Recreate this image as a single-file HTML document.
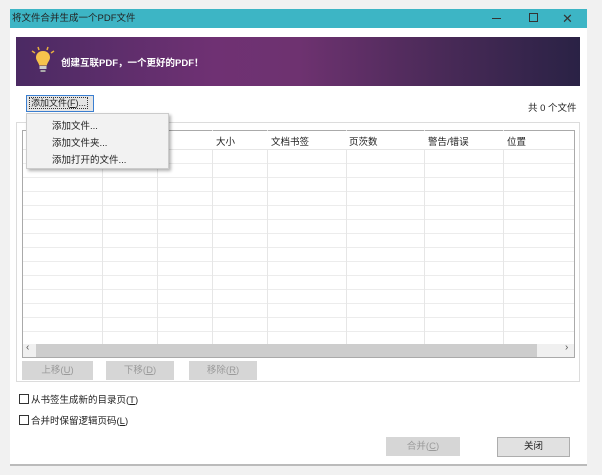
<!DOCTYPE html>
<html><head><meta charset="utf-8"><style>
*{margin:0;padding:0;box-sizing:border-box}
body{width:602px;height:475px;background:#f1f1f1;position:relative;overflow:hidden;font-family:"Liberation Sans","Noto Sans CJK SC",sans-serif;font-size:9.5px;color:#222}
.a{position:absolute;white-space:nowrap}
.win{left:10px;top:9px;width:577px;height:456px;background:#fff}
.title{left:10px;top:9px;width:577px;height:19px;background:#3db5c5;color:#222;font-size:9.5px;line-height:19px;padding-left:2px}
.banner{left:16px;top:37px;width:564px;height:49px;background:linear-gradient(90deg,#4b2a63 0%,#6f3173 35%,#6e3270 50%,#4a2a58 75%,#2a2245 100%)}
.btn{background:#d6d6d6;color:#9a9a9a;text-align:center;line-height:19px;height:19px}
.col{position:absolute;top:130px;height:214px;border-left:1px solid #e6e6e6}
.hdr{position:absolute;top:134px;font-size:9.5px}
</style></head><body>
<div class="a win"></div>
<div class="a title">将文件合并生成一个PDF文件</div>
<div class="a" style="left:492px;top:18px;width:9px;height:1px;background:#333"></div>
<div class="a" style="left:529px;top:13px;width:9px;height:9px;border:1px solid #333"></div>
<div class="a" style="left:562px;top:9px;font-size:13px;line-height:19px;color:#333">✕</div>
<div class="a banner"></div>
<svg class="a" style="left:30px;top:46px" width="26" height="30" viewBox="0 0 26 30">
<g stroke="#e8b040" stroke-width="1.5"><line x1="2" y1="5" x2="5" y2="7"/><line x1="24" y1="5" x2="21" y2="7"/><line x1="8" y1="1" x2="9" y2="4"/><line x1="18" y1="1" x2="17" y2="4"/></g>
<path d="M13 5c-4.5 0-7 3-7 6.5 0 3 2.5 4.5 3.2 8h7.6c.7-3.5 3.2-5 3.2-8C20 8 17.5 5 13 5z" fill="#f6c24c"/>
<rect x="9.5" y="20" width="7" height="3" fill="#ccc"/><rect x="10.5" y="24" width="5" height="2" fill="#aaa"/></svg>
<div class="a" style="left:61px;top:55px;color:#fff;font-size:9.5px;font-weight:bold">创建互联PDF，一个更好的PDF！</div>
<div class="a" style="left:26px;top:95px;width:68px;height:17px;border:1px solid #3b7fd1;background:#e5e5e5;line-height:15px;padding-left:2px;font-size:9px"><span style="border:1px dotted #333;padding:0 1px">添加文件(<u>F</u>)...</span></div>
<div class="a" style="left:528px;top:100px">共 0 个文件</div>
<div class="a" style="left:16px;top:122px;width:564px;height:260px;border:1px solid #dcdcdc"></div>
<div class="a" style="left:22px;top:130px;width:553px;height:228px;border:1px solid #aaa;background:#fff"></div>
<div class="a" style="left:23px;top:150px;width:551px;height:194px;background:repeating-linear-gradient(180deg,transparent 0 13px,#ececec 13px 14px)"></div>
<div class="col" style="left:102px"></div><div class="col" style="left:157px"></div><div class="col" style="left:212px"></div><div class="col" style="left:267px"></div><div class="col" style="left:346px"></div><div class="col" style="left:424px"></div><div class="col" style="left:503px"></div>
<div class="a" style="left:23px;top:131px;width:551px;height:19px;background:#fff;border-bottom:1px solid #e6e6e6"></div>
<div class="hdr" style="left:159px">围</div><div class="hdr" style="left:216px">大小</div><div class="hdr" style="left:271px">文档书签</div><div class="hdr" style="left:349px">页茨数</div><div class="hdr" style="left:428px">警告/错误</div><div class="hdr" style="left:507px">位置</div>
<div class="a" style="left:23px;top:344px;width:551px;height:13px;background:#f0f0f0"></div>
<div class="a" style="left:36px;top:344px;width:501px;height:13px;background:#cdcdcd"></div>
<div class="a" style="left:26px;top:342px;font-size:10px;color:#555">‹</div>
<div class="a" style="left:565px;top:342px;font-size:10px;color:#555">›</div>
<div class="a btn" style="left:22px;top:361px;width:71px">上移(<u>U</u>)</div>
<div class="a btn" style="left:106px;top:361px;width:68px">下移(<u>D</u>)</div>
<div class="a btn" style="left:189px;top:361px;width:68px">移除(<u>R</u>)</div>
<div class="a" style="left:19px;top:394px;width:10px;height:10px;border:1px solid #333"></div>
<div class="a" style="left:31px;top:392px">从书签生成新的目录页(<u>T</u>)</div>
<div class="a" style="left:19px;top:415px;width:10px;height:10px;border:1px solid #333"></div>
<div class="a" style="left:31px;top:413px">合并时保留逻辑页码(<u>L</u>)</div>
<div class="a btn" style="left:386px;top:437px;width:74px">合并(<u>C</u>)</div>
<div class="a" style="left:497px;top:437px;width:73px;height:20px;background:#e1e1e1;border:1px solid #adadad;text-align:center;line-height:18px">关闭</div>
<div class="a" style="left:26px;top:113px;width:143px;height:56px;background:#f2f2f2;border:1px solid #ccc;box-shadow:2px 2px 3px rgba(0,0,0,.3)"></div>
<div class="a" style="left:52px;top:118px">添加文件...</div>
<div class="a" style="left:52px;top:135px">添加文件夹...</div>
<div class="a" style="left:52px;top:152px">添加打开的文件...</div>
<div class="a" style="left:10px;top:464px;width:577px;height:2px;background:#bbb"></div>
</body></html>
